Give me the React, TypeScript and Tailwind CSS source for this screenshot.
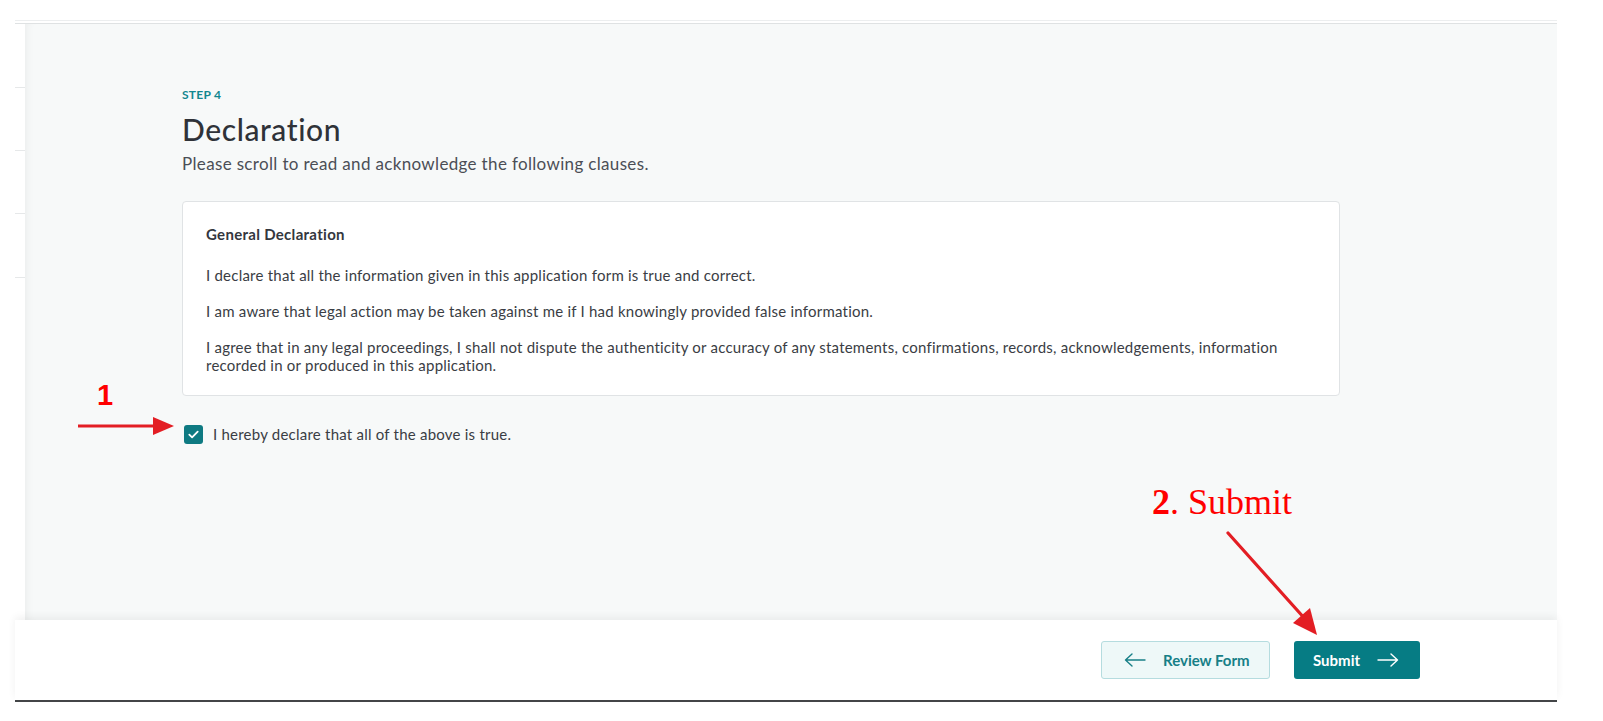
const clauses = [
  "I declare that all the information given in this application form is true and correct.",
  "I am aware that legal action may be taken against me if I had knowingly provided false information.",
  "I agree that in any legal proceedings, I shall not dispute the authenticity or accuracy of any statements, confirmations, records, acknowledgements, information recorded in or produced in this application.",
]

function LongArrow({ dir }: { dir: "left" | "right" }) {
  return (
    <svg width="22" height="14" viewBox="0 0 22 14" fill="none" className="shrink-0">
      {dir === "right" ? (
        <path d="M1 7h19.5M14 1l6.5 6-6.5 6" stroke="currentColor" strokeWidth="1.4" strokeLinecap="round" strokeLinejoin="round" />
      ) : (
        <path d="M21 7H1.5M8 1L1.5 7 8 13" stroke="currentColor" strokeWidth="1.4" strokeLinecap="round" strokeLinejoin="round" />
      )}
    </svg>
  )
}

function Annotations() {
  return (
    <>
      <span className="absolute left-[97px] top-[381px] font-['Liberation_Sans',Arial,sans-serif] text-[29px] font-bold leading-none text-[#ff0000]">
        1
      </span>
      <svg className="absolute left-[76px] top-[414px]" width="100" height="24" viewBox="0 0 100 24">
        <path d="M2 12H80" stroke="#e31e24" strokeWidth="3" />
        <path d="M77 3L98 12L77 21Z" fill="#e31e24" />
      </svg>
      <span className="absolute left-[1152px] top-[484px] font-['Liberation_Serif','Times_New_Roman',serif] text-[36px] leading-none text-[#ff0000]">
        <b>2</b>. Submit
      </span>
      <svg className="absolute left-[1222px] top-[528px]" width="100" height="112" viewBox="0 0 100 112">
        <path d="M6 5L84 92" stroke="#e31e24" strokeWidth="3.2" strokeLinecap="round" />
        <path d="M95 107L71 95L88 80Z" fill="#e31e24" />
      </svg>
    </>
  )
}

export default function App() {
  return (
    <div className="relative h-[721px] w-[1603px] overflow-hidden bg-white font-['Lato','Noto_Sans',sans-serif] text-[#33363d] [font-variant-ligatures:none]">
      <div className="pl-[15px] pt-[20px]">
        <div className="w-[1542px]">
          <div className="h-px bg-[#eceeef]" />
          <div className="h-[2px]" />
          <div className="h-px bg-[#dfe2e3]" />
          <div className="flex h-[596px]">
            <div className="flex w-[10px] flex-col bg-white">
              {[64, 63, 63, 64].map((gap, i) => (
                <div key={i} className="contents">
                  <div style={{ height: gap - 1 }} />
                  <div className="h-px bg-[#e6e8e9]" />
                </div>
              ))}
            </div>
            <main className="flex-1 bg-[#f7f9f9] pl-[157px] pt-[63px] shadow-[inset_8px_0_8px_-6px_rgba(0,0,0,0.05)]">
              <p className="text-[12px] font-bold uppercase leading-4 tracking-[0.02em] text-[#12878f]">Step 4</p>
              <h1 className="mt-[8px] text-[30px] font-medium leading-9 tracking-[0.02em] text-[#2f3238]">Declaration</h1>
              <p className="mt-[6px] text-[17px] leading-[22px] tracking-[0.02em] text-[#4b4e56]">
                Please scroll to read and acknowledge the following clauses.
              </p>
              <div className="mt-[26px] w-[1158px] rounded-[4px] border border-[#e0e3e5] bg-white pb-[21px] pl-[23px] pr-[22px] pt-[22px]">
                <h2 className="text-[15px] font-bold leading-5 tracking-[0.02em] text-[#34373e]">General Declaration</h2>
                <div className="mt-[22px] flex flex-col gap-[18px] text-[15px] leading-[18px] tracking-[0.015em] text-[#3a3d44]">
                  {clauses.map((c) => (
                    <p key={c}>{c}</p>
                  ))}
                </div>
              </div>
              <label className="ml-[2px] mt-[27px] flex items-center gap-[10px] text-[15px] tracking-[0.015em] text-[#3a3d44]">
                <span className="flex h-[19px] w-[19px] items-center justify-center rounded-[3px] bg-[#0e7a82]">
                  <svg width="11" height="9" viewBox="0 0 11 9" fill="none">
                    <path d="M1.3 4.6L4.1 7.3L9.7 1.6" stroke="white" strokeWidth="1.8" strokeLinecap="round" strokeLinejoin="round" />
                  </svg>
                </span>
                I hereby declare that all of the above is true.
              </label>
            </main>
          </div>
          <footer className="relative flex h-[80px] items-center justify-end gap-[24px] bg-white pr-[137px] shadow-[0_-3px_8px_rgba(0,0,0,0.06)]">
            <button className="flex h-[38px] w-[169px] items-center gap-[17px] rounded-[3px] border border-[#b5dcdf] bg-[#eef8f8] pl-[22px] text-[15px] font-bold text-[#177f87]">
              <LongArrow dir="left" />
              Review Form
            </button>
            <button className="flex h-[38px] w-[126px] items-center gap-[17px] rounded-[3px] bg-[#067c84] pl-[19px] text-[15px] font-bold text-white">
              Submit
              <LongArrow dir="right" />
            </button>
          </footer>
          <div className="h-[2px] bg-[#444648]" />
        </div>
      </div>
      <Annotations />
    </div>
  )
}
